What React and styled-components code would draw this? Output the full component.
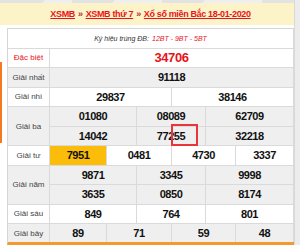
import React from "react";
import styled, { createGlobalStyle } from "styled-components";

const GlobalStyle = createGlobalStyle`
  html, body { margin: 0; padding: 0; background: #ffffff; }
  body { font-family: "Liberation Sans", Arial, sans-serif; }
  * { box-sizing: border-box; }
`;

const Page = styled.div`
  position: relative;
  width: 300px;
  height: 245px;
  overflow: hidden;
  display: flex;
  background: #ffffff;
`;

const Content = styled.div`
  width: 294px;
  display: flex;
  flex-direction: column;
`;

const TopStrip = styled.div`
  height: 3px;
  background: #e3e3e3;
  display: flex;
  padding-left: 42px;
`;

const Tab = styled.div`
  width: ${(p) => p.$w}px;
  margin-right: ${(p) => p.$gap}px;
  background: #efefef;
  clip-path: polygon(3px 0, 100% 0, 100% 100%, 0 100%);
`;

const Header = styled.div`
  height: 22px;
  background: #fdf3c9;
  padding-left: 7px;
  display: flex;
  align-items: center;
  justify-content: center;
  font-size: 9px;
  font-weight: bold;
  letter-spacing: -0.35px;
  white-space: nowrap;
`;

const Crumb = styled.span`
  color: #e8141b;
  text-decoration: underline;
`;

const Sep = styled.span`
  color: #b03030;
  margin: 0 3px;
`;

const Body = styled.div`
  margin-top: 3px;
  display: flex;
`;

const Gutter = styled.div`
  width: 7px;
  display: flex;
  flex-direction: column;
`;

const OrangeBar = styled.div`
  width: 2px;
  height: 81px;
  margin-top: 34px;
  background: #f47a20;
`;

const RightStrip = styled.div`
  width: 6px;
  background: #ececec;
  border-left: 1px solid #d9d9d9;
`;

const Table = styled.div`
  width: 287px;
  display: grid;
  grid-template-columns: 42px 57px 30px 35px 34px 30px 58px;
  grid-template-rows: repeat(10, 19.5px) 18px;
  border-left: 1px solid #d6d6d6;
  border-top: 1px solid #d6d6d6;
  border-bottom: 3px solid #f39a2e;
`;

const Cell = styled.div`
  grid-column: span ${(p) => p.$span || 1};
  grid-row: span ${(p) => p.$rows || 1};
  background: ${(p) => p.$bg};
  border-right: 1px solid #dadada;
  border-bottom: ${(p) => (p.$last ? "none" : "1px solid #dadada")};
  display: flex;
  align-items: center;
  justify-content: center;
  white-space: nowrap;
`;

const Label = styled(Cell)`
  font-size: 8px;
  color: ${(p) => (p.$red ? "#e8141b" : "#444444")};
`;

const Num = styled(Cell)`
  font-size: ${(p) => (p.$big ? 13 : 11)}px;
  font-weight: bold;
  letter-spacing: -0.45px;
  color: ${(p) => (p.$big ? "#e8141b" : "#111111")};
`;

const Note = styled(Cell)`
  grid-column: 1 / -1;
  font-size: 7px;
  font-style: italic;
  color: #333333;
`;

const NoteRed = styled.span`
  color: #e8141b;
  margin-left: 3px;
`;

const Mark = styled.div`
  position: absolute;
  left: 171px;
  top: 123.5px;
  width: 27px;
  height: 22px;
  border: 2px solid #e8353a;
`;

const GRAY = "#efefef";
const WHITE = "#ffffff";

const prizes = [
  { label: "Đặc biệt", red: true, bg: WHITE, lines: [["34706"]], spans: [6], big: true },
  { label: "Giải nhất", bg: GRAY, lines: [["91118"]], spans: [6] },
  { label: "Giải nhì", bg: WHITE, lines: [["29837", "38146"]], spans: [3, 3] },
  { label: "Giải ba", bg: GRAY, lines: [["01080", "08089", "62709"], ["14042", "77255", "32218"]], spans: [2, 2, 2] },
  { label: "Giải tư", bg: WHITE, lines: [["7951", "0481", "4730", "3337"]], spans: [1, 2, 2, 1], hl: "7951" },
  { label: "Giải năm", bg: GRAY, lines: [["9871", "3345", "9998"], ["3635", "0850", "8174"]], spans: [2, 2, 2] },
  { label: "Giải sáu", bg: WHITE, lines: [["849", "764", "801"]], spans: [2, 2, 2] },
  { label: "Giải bảy", bg: GRAY, lines: [["89", "71", "59", "48"]], spans: [1, 2, 2, 1], last: true },
];

export default function App() {
  return (
    <>
      <GlobalStyle />
      <Page>
        <Content>
          <TopStrip>
            <Tab $w={30} $gap={40} />
            <Tab $w={50} $gap={40} />
            <Tab $w={60} $gap={0} />
          </TopStrip>
          <Header>
            <Crumb>XSMB</Crumb>
            <Sep>»</Sep>
            <Crumb>XSMB thứ 7</Crumb>
            <Sep>»</Sep>
            <Crumb>Xổ số miền Bắc 18-01-2020</Crumb>
          </Header>
          <Body>
            <Gutter>
              <OrangeBar />
            </Gutter>
            <Table>
              <Note $bg={WHITE}>
                Ký hiệu trúng ĐB:<NoteRed>12BT - 9BT - 5BT</NoteRed>
              </Note>
              {prizes.map((p) => (
                <React.Fragment key={p.label}>
                  <Label $bg={p.bg} $rows={p.lines.length} $red={p.red} $last={p.last}>
                    {p.label}
                  </Label>
                  {p.lines.map((line, li) =>
                    line.map((n, i) => (
                      <Num
                        key={`${li}-${i}`}
                        $span={p.spans[i]}
                        $bg={p.hl === n ? "#fbbd0a" : p.bg}
                        $big={p.big}
                        $last={p.last}
                      >
                        {n}
                      </Num>
                    ))
                  )}
                </React.Fragment>
              ))}
            </Table>
          </Body>
        </Content>
        <RightStrip />
        <Mark />
      </Page>
    </>
  );
}
